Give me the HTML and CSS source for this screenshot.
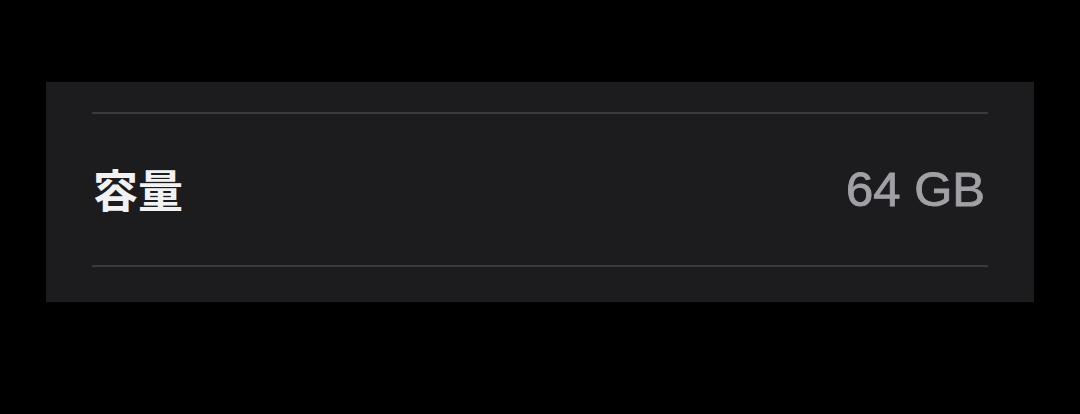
FILE: index.html
```html
<!DOCTYPE html>
<html lang="ja">
<head>
<meta charset="utf-8">
<link rel="stylesheet" href="styles.css">
</head>
<body>
<div class="panel">
  <div class="row">
    <span class="label">容量</span>
    <span class="value">64 GB</span>
  </div>
</div>
</body>
</html>
```
FILE: styles.css
```css
html, body {
  margin: 0;
  padding: 0;
  background: #000;
  width: 1080px;
  height: 414px;
  overflow: hidden;
}
.panel {
  margin: 82px 0 0 46px;
  width: 988px;
  height: 220px;
  box-sizing: border-box;
  padding: 30px 46px 0 46px;
  background: #1c1c1e;
}
.row {
  height: 155px;
  box-sizing: border-box;
  border-top: 2px solid #3a3a3d;
  border-bottom: 2px solid #3a3a3d;
  display: flex;
  align-items: center;
  justify-content: space-between;
  padding: 0 3px 2px 1px;
}
.label {
  font-family: "Noto Sans CJK JP", "Noto Sans", sans-serif;
  font-weight: 700;
  font-size: 45px;
  color: #f2f2f4;
}
.value {
  font-family: "Liberation Sans", Arial, sans-serif;
  font-size: 49px;
  color: #a0a0a6;
  -webkit-text-stroke: 0.9px #a0a0a6;
}
```
